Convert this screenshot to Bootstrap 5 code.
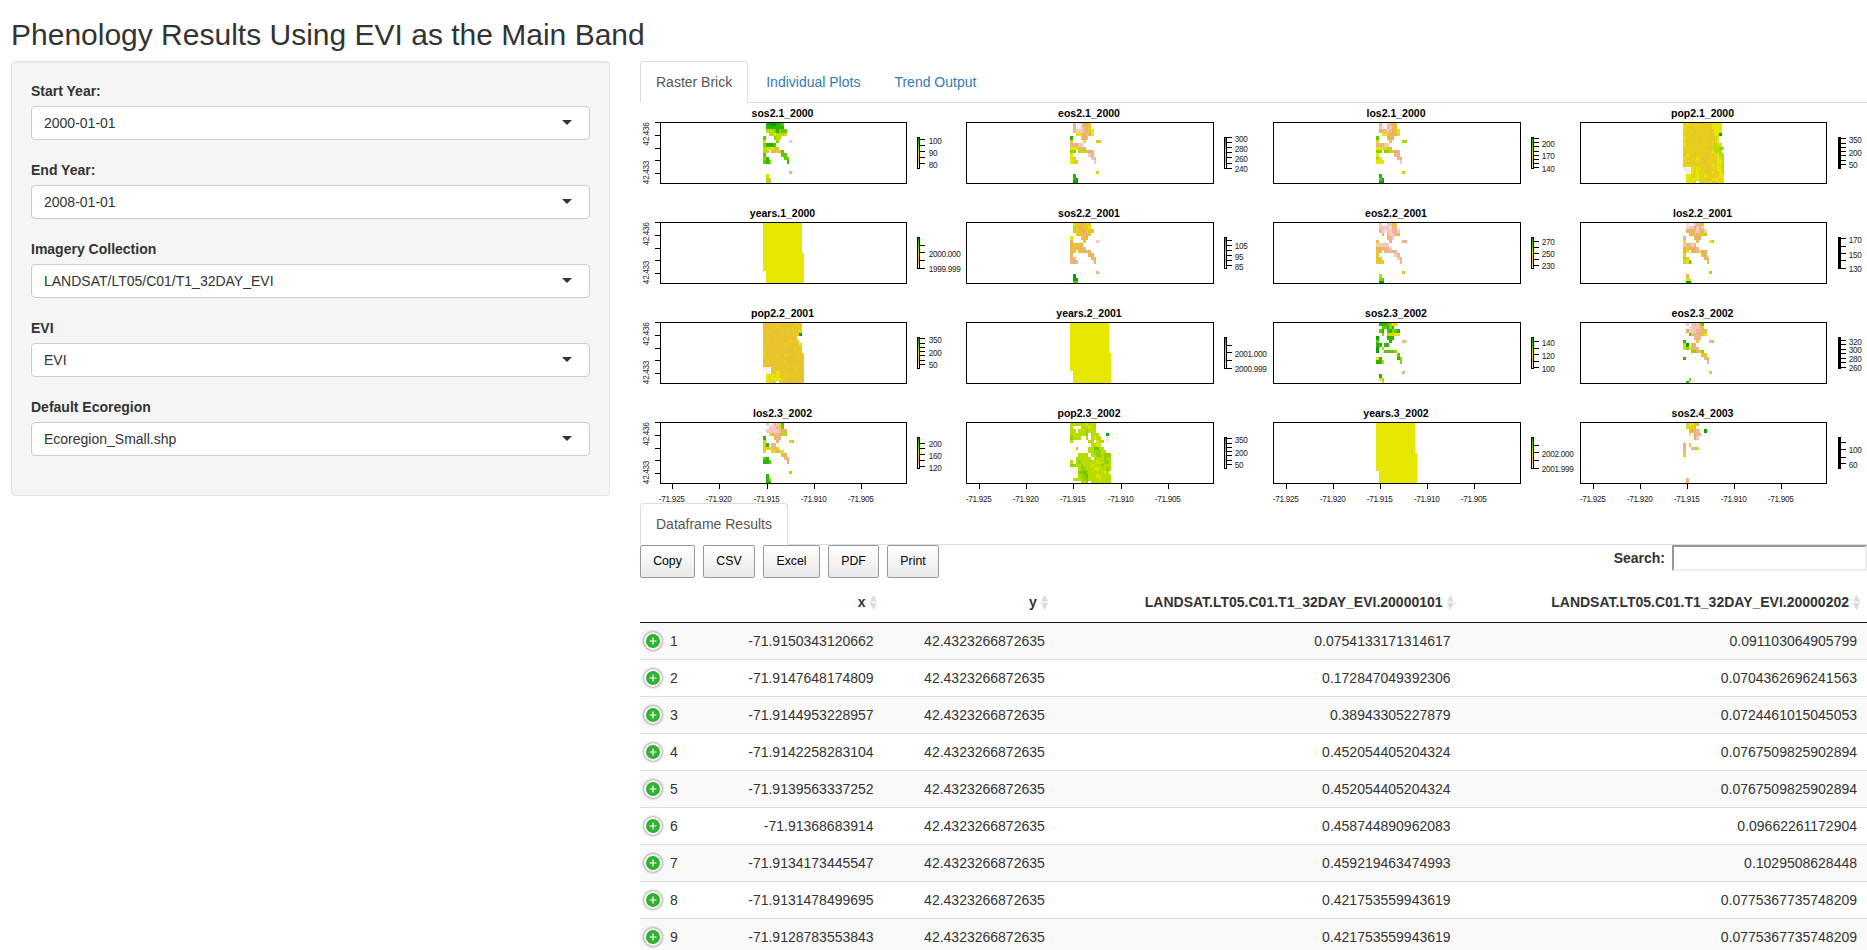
<!DOCTYPE html>
<html lang="en">
<head>
<meta charset="utf-8">
<meta name="viewport" content="width=device-width, initial-scale=1">
<title>Phenology Results</title>
<link href="https://cdn.jsdelivr.net/npm/bootstrap@5.3.0/dist/css/bootstrap.min.css" rel="stylesheet">
<style>
body{font-family:"Liberation Sans",Arial,sans-serif;font-size:14px;line-height:20px;color:#333;background:#fff;overflow:hidden;height:950px}
.page-title{font-size:30px;line-height:33px;font-weight:400;margin:0;padding:18px 0 10px 11px}
.side{width:599px;margin-left:11px;margin-right:30px;align-self:flex-start}
.well{background:#f5f5f5;border:1px solid #e3e3e3;border-radius:4px;padding:19px 19px 39px;box-shadow:inset 0 1px 1px rgba(0,0,0,.05);height:435px}
.well label{font-weight:700;margin-bottom:5px;line-height:20px;display:block}
.picker{height:34px;border:1px solid #ccc;border-radius:4px;background:#fff;padding:6px 17px 6px 12px;margin-bottom:20px}
.caret{border:5px solid transparent;border-top-color:#333;border-bottom:0;margin-top:-1px}
.results{width:1227px}
.nav-tabs{border-bottom:1px solid #ddd;--bs-nav-tabs-border-width:1px;height:42px}
.nav-tabs .nav-link{font-size:14px;line-height:20px;padding:10px 15px;margin-right:2px;color:#337ab7;border:1px solid transparent;border-radius:4px 4px 0 0;height:42px;margin-bottom:-1px}
.nav-tabs .nav-link.active{color:#555;border-color:#ddd #ddd #fff;background:#fff}
.plots{display:block}
.plots text{font-family:"Liberation Sans",Arial,sans-serif;font-size:8.2px;letter-spacing:-.3px;fill:#222}
.plots text.ttl{font-size:10.5px;letter-spacing:0;font-weight:700;fill:#000}
.dt-btn{height:33px;border:1px solid #999;border-radius:2px;background:linear-gradient(#fff,#e9e9e9);font-size:12.32px;color:#000;padding:0 0 2px}
.finder{width:195px;height:26px;border:2px solid;border-color:#999 #eee #eee #999;background:#fff;padding:1px 2px;border-radius:0;margin-left:7px}
.grid-data{table-layout:fixed;width:1227px;border-collapse:separate;border-spacing:0}
.grid-data th{padding:10px 18px;border-bottom:1px solid #111;text-align:right;height:41px;position:relative;line-height:20px}
.grid-data th svg{position:absolute;right:7px;top:13px}
.grid-data td{padding:8px 10px;text-align:right;border-top:1px solid #ddd;line-height:20px}
.grid-data tbody tr:first-child td{border-top:0}
.grid-data tbody tr:nth-child(odd) td{background:#f9f9f9}
.grid-data td:first-child{text-align:left;padding-left:4px}
.plus{width:18px;height:18px;border:2px solid #fff;border-radius:50%;background:#31b131;box-shadow:0 0 3px #444;margin-right:8px}
</style>
</head>
<body>
<h2 class="page-title">Phenology Results Using EVI as the Main Band</h2>
<div class="d-flex">
  <aside class="side">
    <form class="well">
      <label>Start Year:</label>
      <div class="picker d-flex align-items-center justify-content-between"><span>2000-01-01</span><i class="caret"></i></div>
      <label>End Year:</label>
      <div class="picker d-flex align-items-center justify-content-between"><span>2008-01-01</span><i class="caret"></i></div>
      <label>Imagery Collection</label>
      <div class="picker d-flex align-items-center justify-content-between"><span>LANDSAT/LT05/C01/T1_32DAY_EVI</span><i class="caret"></i></div>
      <label>EVI</label>
      <div class="picker d-flex align-items-center justify-content-between"><span>EVI</span><i class="caret"></i></div>
      <label>Default Ecoregion</label>
      <div class="picker d-flex align-items-center justify-content-between"><span>Ecoregion_Small.shp</span><i class="caret"></i></div>
    </form>
  </aside>
  <main class="results flex-shrink-0">
    <ul class="nav nav-tabs">
      <li class="nav-item"><a class="nav-link active">Raster Brick</a></li>
      <li class="nav-item"><a class="nav-link">Individual Plots</a></li>
      <li class="nav-item"><a class="nav-link">Trend Output</a></li>
    </ul>
    <svg class="plots" id="plots" width="1227" height="400" viewBox="640 103 1227 400" shape-rendering="crispEdges">
      <defs><linearGradient id="ramp" x1="0" y1="0" x2="0" y2="1"><stop offset="0" stop-color="#00a600"/><stop offset=".25" stop-color="#63c600"/><stop offset=".5" stop-color="#e6e600"/><stop offset=".75" stop-color="#ebb25e"/><stop offset="1" stop-color="#f2f2f2"/></linearGradient></defs>
    </svg>
    <ul class="nav nav-tabs">
      <li class="nav-item"><a class="nav-link active">Dataframe Results</a></li>
    </ul>
    <div class="d-flex justify-content-between align-items-start" style="height:37px">
      <div class="d-flex gap-2">
        <button class="dt-btn" style="width:55px">Copy</button>
        <button class="dt-btn" style="width:52px">CSV</button>
        <button class="dt-btn" style="width:57px">Excel</button>
        <button class="dt-btn" style="width:51px">PDF</button>
        <button class="dt-btn" style="width:52px">Print</button>
      </div>
      <div class="d-flex align-items-center"><b>Search:</b><input class="finder" type="text"></div>
    </div>
    <table class="grid-data">
      <colgroup><col style="width:73px"><col style="width:170.6px"><col style="width:171.2px"><col style="width:405.8px"><col style="width:406.4px"></colgroup>
      <thead><tr id="heads"><th></th></tr></thead>
      <tbody id="rows"></tbody>
    </table>
  </main>
</div>
<script src="https://cdn.jsdelivr.net/npm/bootstrap@5.3.0/dist/js/bootstrap.bundle.min.js"></script>
<script>
// Terrain colour ramp, dark green down to near white
const ramp={a:'#00a600',b:'#2db600',c:'#63c600',d:'#90d200',e:'#b8dc00',f:'#d6e200',g:'#e6e600',h:'#e7ce1d',i:'#e8c32e',j:'#ebb25e',k:'#edb48e',m:'#f0c9c0',n:'#f1dfdb',w:'#f2f2f2'};
// Cell edges relative to the panel's frame
const cx=[103,106,109,111,114,116,119,121,124,127,129,132,134,137,139,142,144];
const cy=[1,4,7,11,14,18,21,25,28,31,35,38,42,45,49,52,56,59,61];
const left=[660,966,1273,1580],right=[906,1213,1520,1826],top_=[122,222,322,422];
const years=Array.from({length:18},(_,r)=>(r<14?'g':'.')+'g'.repeat(r<9?14:15)).join('/');
const popT=[16,21,25,29,33,38,42],popL=[['350',18],['200',31],['50',43]],yrT=[23,30,38,46];
const yl=(a,b)=>[[a,32],[b,47]];
const panels=[
['sos2.1_2000','.baaabbc/.bbbbbbb/.eeedbdcc/..eegeeeh/c...dee/f....d....mw/dbbbc/efhgee/ee.jjhjc/c......cc/db......cc/cbd......b///..........k/.f/.ej/.ej',[17,23,29,35,41],[['100',19],['90',31],['80',43]]],
['eos2.1_2000','.kwwmjji/.kwwmkii/.kmmmkjig/..gghjkjg/b...kjk/i....g....ii/kkjmm/gggikj/dd.eeeijk/g......mk/gh......mk/ghh......m///..........h/.b/.ba/.aa',[15,20,25,30,35,41,46],[['300',17],['280',27],['260',37],['240',47]]],
['los2.1_2000','.kwwmkji/.mnwkmjj/.jkkmkjig/..ggkjjjg/c...jjj/f....f....ed/kkkmm/ggffij/dd.ddehjk/g......kk/eg......kj/ggg......m///..........e/.b/.ca/.aa',[16,20,24,29,33,37,41,45],[['200',22],['170',34],['140',47]]],
['pop2.1_2000','hghhhhhhhhhgggg/ghhihhhihhhgggg/hhhhihhhhhihggg/hhhhhhhhhhihgga/ghhhhhhhhhhihgw./hhihhhihhhihhg./ghhhhhhhhhhheff/ihhhhhhhhhiheede/hhhhhhhhhhhgeee/ighhhhhiiihhhgee/ghhhhghiiihhhgfe/hhihhhhhihhhhgge/hhhhhhhhhihghgfe/wwwghgghhihhhgge/.wwghghhhhhghhge/.gghfghhghhhihgg/.ghgfghhhihggghg/.gfgh.ghhhghhghg',popT,popL],
['years.1_2000',years,yrT,yl('2000.000','1999.999')],
['sos2.2_2001','.fhijihh/.ehjihhg/.ehijjhie/..hiikji/g...hjj/j....h....mw/jiiij/ijijjk/ji.ijjkj/j......jj/jk......jj/kjk......j///..........k/.a/.aa/.cc',[18,23,28,33,38,43],[['105',24],['95',35],['85',45]]],
['eos2.2_2001','.mwwmmii/.mmmmnkk/.kmnmmkkm/..i.kmmki/....kkm/i....k....kk/mmmmm/jiikkm/ij.kkkkk/i......mk/ii......mk/iih......k///..........i/.e/.dc/.aa',[19,25,31,37,43],[['270',20],['250',32],['230',44]]],
['los2.2_2001','.nwwmkii/.nmmjmkm/.jjjkmkim/..jjhjiie/k...jjj/g....j....ge/mkkmk/jhjjjk/jg.jjkgjj/h......jj/eh......jj/hgc......i///..........e/.j/.gg/.aa',[16,24,31,38,46],[['170',18],['150',33],['130',47]]],
['pop2.2_2001','iiiiiiiiihiihhh/iiiiihhiiiiihihh/ihiiiiiiihihiih/iiiiiiiihiiihiha/iiiiiiiiiiiiiw./ihiihiiiiihiihw/hiiiiiiihiiiiig/iiiiiiiiiiiihii/hiiiiiiiiiiiiih/hiiiihiihhiiihii/iiiiiiiiiiiiiiii/ihiiiiiihiiiiiih/iiiiiiiiihiihiii/wwwiiiiiiiiihiii/.wwihghiiiiihiii/.ghghghihiiiihii/.ghgggghiiiihiii/.ggih.ihiiiiiiii'.replace('iiiiiiiihiiihiha','iiiiiiihiiihiha').replace('iiiiihhiiiiihihh','iiiihhiiiiihihh'),popT,popL],
['years.2_2001',years,yrT,yl('2001.000','2000.999')],
['sos2.3_2002','.bbbcdgh/..ccbdb/.cb.cbdcb/..d.effgg/a...bbb/c....b....km/bb.bb/a.e/a..ccccd/........c/gb......bd/bbe......d///..........k/.b/.ge/..f',[19,26,32,39,45],[['140',21],['120',34],['100',47]]],
['eos2.3_2002','.m.mkmhc/..nmmmkh/.jmmmkkjj/..ckkkjig/....kkk/b....i....kj/ha.jj/hdgjjk/...ddjhd/.......ih/b.......kj/.........k///..........h//..d/.b',[18,22,27,31,36,40,45],[['320',20],['300',28],['280',37],['260',46]]],
['los2.3_2002','.m.nkmhc/..mmmkgc/.mmmmmkjj/..gjkkjee/b...jkk/e....j....he/ib.kk/ihhkih/f..ffjig/.......ij/cb......kj/bbc......j///..........e/.b/.be/.bb',[21,26,32,38,44],[['200',22],['160',34],['120',46]]],
['pop2.3_2002','eeeeeefeee/e...eeefee/ee.eeedeee/eeeeeed.eee...a/deee..e.efee..w/e......ee.fee.w/........eeff/..e....eeccee/.......eedddee/...eeee.eeddeddd/..eeeeee.eeeedee/e.edeeeeeefeedde/ddeedeeefeeedeee/wwweddeeeffeeede/.wwddcdeeeeeege/...eddceeeffeeee/.eeeeddeeeefeeee/....eed.eeeeeeee',popT,popL],
['years.3_2002',years,yrT,yl('2002.000','2001.999')],
['sos2.4_2003','.kgghi/.ffhj/..hjikn.a/..m.jkk/....jm//j.h/k..kkh/k/f/w//////.k/.j',[20,27,35,41],[['100',28],['60',43]]]
];
let out='';
const rect=(x,y,w,h,f)=>`<rect x="${x}" y="${y}" width="${w}" height="${h}" fill="${f}"/>`;
panels.forEach(([name,map,ticks,labels],n)=>{
  const c=n%4,r=n>>2,L=left[c],R=right[c],T=top_[r],dx=c===1?1:0;
  map.split('/').forEach((line,j)=>[...line].forEach((k,i)=>{
    if(ramp[k])out+=rect(L+cx[i]+dx,T+cy[j],cx[i+1]-cx[i],cy[j+1]-cy[j],ramp[k]);
  }));
  out+=`<rect x="${L+.5}" y="${T+.5}" width="${R-L}" height="61" fill="none" stroke="#000"/>`;
  out+=`<text class="ttl" x="${(L+R)/2-.5}" y="${T-5}" text-anchor="middle">${name}</text>`;
  const K=L+(c===0?257:258);
  out+=rect(K,T+15,3,32,'#000');
  if(c<3)out+=rect(K+1,T+16,1,30,'url(#ramp)');
  ticks.forEach(t=>out+=rect(K+2,T+t,6,1,'#000'));
  labels.forEach(([s,y])=>out+=`<text x="${L+268.8}" y="${T+y+3.2}">${s}</text>`);
  if(c===0){
    [0,13,26,38,51].forEach(t=>out+=rect(655,T+t,5,1,'#000'));
    [['42.436',12],['42.433',50.5]].forEach(([s,y])=>out+=`<text transform="translate(649 ${T+y}) rotate(-90)" text-anchor="middle">${s}</text>`);
  }
  if(r===3)[-71.925,-71.920,-71.915,-71.910,-71.905].forEach((v,i)=>{
    const x=L+[c===0?12:13,c===1?60:c===0?59:60,107,c===1?155:154,c===1?202:201][i];
    out+=rect(x,484,1,5,'#000')+`<text x="${x-.3}" y="502" text-anchor="middle">${v.toFixed(3)}</text>`;
  });
});
document.getElementById('plots').insertAdjacentHTML('beforeend',out);
const sort='<svg width="7" height="15" viewBox="0 0 7 15"><path d="M3.5 0L7 6.6H0zM3.5 15L7 8H0z" fill="#dcdcdc"/></svg>';
document.getElementById('heads').insertAdjacentHTML('beforeend',['x','y','LANDSAT.LT05.C01.T1_32DAY_EVI.20000101','LANDSAT.LT05.C01.T1_32DAY_EVI.20000202'].map(t=>`<th>${t}${sort}</th>`).join(''));
const plus='<span class="plus d-inline-flex align-items-center justify-content-center align-top" style="margin-top:1px"><svg width="8" height="8" viewBox="0 0 8 8"><path d="M4 .5v7M.5 4h7" stroke="#fff" stroke-width="1.2"/></svg></span>';
document.getElementById('rows').innerHTML=[
['-71.9150343120662','0.0754133171314617','0.091103064905799'],
['-71.9147648174809','0.172847049392306','0.0704362696241563'],
['-71.9144953228957','0.38943305227879','0.0724461015045053'],
['-71.9142258283104','0.452054405204324','0.0767509825902894'],
['-71.9139563337252','0.452054405204324','0.0767509825902894'],
['-71.91368683914','0.458744890962083','0.09662261172904'],
['-71.9134173445547','0.459219463474993','0.1029508628448'],
['-71.9131478499695','0.421753559943619','0.0775367735748209'],
['-71.9128783553843','0.421753559943619','0.0775367735748209']
].map((d,i)=>`<tr><td>${plus}${i+1}</td><td>${d[0]}</td><td>42.4323266872635</td><td>${d[1]}</td><td>${d[2]}</td></tr>`).join('');
</script>
</body>
</html>
